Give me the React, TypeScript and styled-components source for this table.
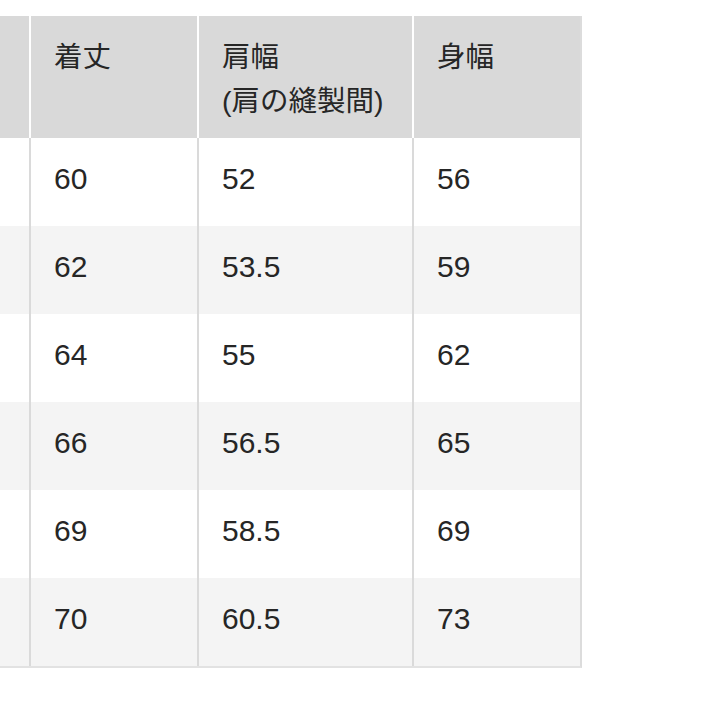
import { Fragment } from 'react';
import styled, { createGlobalStyle } from 'styled-components';

const GlobalStyle = createGlobalStyle`
  html, body {
    margin: 0;
    padding: 0;
    background: #fff;
  }
  body {
    font-family: "Liberation Sans", "Noto Sans CJK JP", sans-serif;
    color: #262626;
  }
`;

const Table = styled.div`
  margin-top: 16px;
  display: grid;
  grid-template-columns: 29px 168px 215px 168px;
  width: 580px;
  border-right: 2px solid #dcdcdc;
  border-bottom: 2px solid #e2e2e2;
`;

const HeadCell = styled.div<{ $first?: boolean }>`
  height: 122px;
  box-sizing: border-box;
  padding: 19px 0 0 23px;
  background: #d9d9d9;
  border-left: ${(p) => (p.$first ? 'none' : '2px solid #fff')};
  font-size: 28.5px;
  line-height: 44px;
  white-space: nowrap;
`;

const Cell = styled.div<{ $shade: boolean; $first?: boolean }>`
  height: 88px;
  box-sizing: border-box;
  padding: 19px 0 0 23px;
  background: ${(p) => (p.$shade ? '#f4f4f4' : '#fff')};
  border-left: ${(p) => (p.$first ? 'none' : '2px solid #dadada')};
  font-size: 30px;
  line-height: 44px;
`;

const headers = [['着丈'], ['肩幅', '(肩の縫製間)'], ['身幅']];

const rows = [
  ['60', '52', '56'],
  ['62', '53.5', '59'],
  ['64', '55', '62'],
  ['66', '56.5', '65'],
  ['69', '58.5', '69'],
  ['70', '60.5', '73'],
];

export default function App() {
  return (
    <>
      <GlobalStyle />
      <Table>
        <HeadCell $first />
        {headers.map((lines, i) => (
          <HeadCell key={i}>
            {lines.map((l, j) => (
              <div key={j}>{l}</div>
            ))}
          </HeadCell>
        ))}
        {rows.map((row, r) => (
          <Fragment key={r}>
            <Cell $first $shade={r % 2 === 1} />
            {row.map((v, c) => (
              <Cell key={c} $shade={r % 2 === 1}>
                {v}
              </Cell>
            ))}
          </Fragment>
        ))}
      </Table>
    </>
  );
}
